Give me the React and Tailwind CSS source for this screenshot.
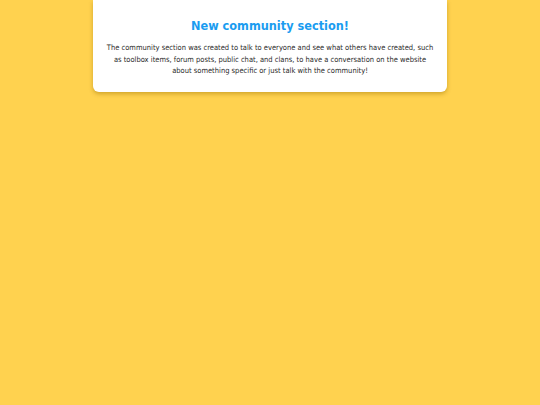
export default function App() {
  return (
    <div className="min-h-[405px] w-full bg-[#ffd24f] flex justify-center" style={{ fontFamily: '"DejaVu Sans Condensed", "DejaVu Sans", sans-serif' }}>
      <div className="w-[354px] h-[92px] bg-white rounded-b-md shadow-[0_2px_4px_rgba(150,110,0,0.45)] flex flex-col items-center px-[12px] pt-[18px]">
        <h1 className="text-[12.6px] leading-[16px] font-bold text-[#1a9cf0]">New community section!</h1>
        <p className="mt-[8px] text-[7.5px] leading-[11.5px] text-[#2b2b2b] text-center">
          The community section was created to talk to everyone and see what others have created, such as toolbox items, forum posts, public chat, and clans, to have a conversation on the website about something specific or just talk with the community!
        </p>
      </div>
    </div>
  );
}
